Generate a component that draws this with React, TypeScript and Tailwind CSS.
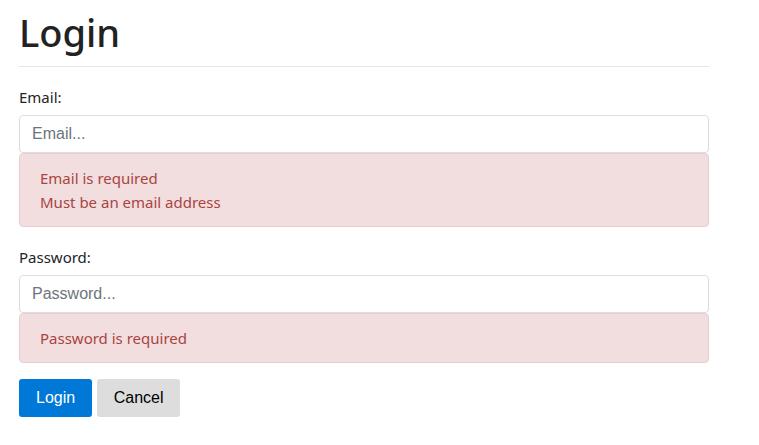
export default function App() {
  return (
    <div className="bg-white min-h-screen font-['Noto_Sans',sans-serif] text-[#212529]">
      <div className="w-[690px] ml-[19px]">
        <h1 className="text-[38px] leading-[46px] font-medium pt-[9px] pb-[11px] border-b border-[#e5e5e5] text-[#222]">
          Login
        </h1>

        <form className="mt-[18px]">
          <label className="block text-[15px] leading-[24px] mb-[6px]">Email:</label>
          <input
            type="text"
            placeholder="Email..."
            className="block w-full h-[38px] px-3 border border-[#ddd] rounded-[4px] font-['Liberation_Sans',Arial,sans-serif] text-[16px] placeholder:text-[#6c757d] outline-none"
          />
          <div className="border border-[#ebccd1] bg-[#f2dede] rounded-[4px] px-5 py-3 text-[#a94442] text-[15px] leading-[24px]">
            <div>Email is required</div>
            <div>Must be an email address</div>
          </div>

          <label className="block text-[15px] leading-[24px] mt-[18px] mb-[6px]">Password:</label>
          <input
            type="password"
            placeholder="Password..."
            className="block w-full h-[38px] px-3 border border-[#ddd] rounded-[4px] font-['Liberation_Sans',Arial,sans-serif] text-[16px] placeholder:text-[#6c757d] outline-none"
          />
          <div className="border border-[#ebccd1] bg-[#f2dede] rounded-[4px] px-5 py-3 text-[#a94442] text-[15px] leading-[24px]">
            <div>Password is required</div>
          </div>

          <div className="flex gap-[5px] mt-[16px] font-['Liberation_Sans',Arial,sans-serif] text-[16px]">
            <button type="button" className="h-[38px] px-[17px] bg-[#0078d7] text-white rounded-[3px]">
              Login
            </button>
            <button type="button" className="h-[38px] w-[83px] bg-[#ddd] text-black rounded-[3px]">
              Cancel
            </button>
          </div>
        </form>
      </div>
    </div>
  );
}
